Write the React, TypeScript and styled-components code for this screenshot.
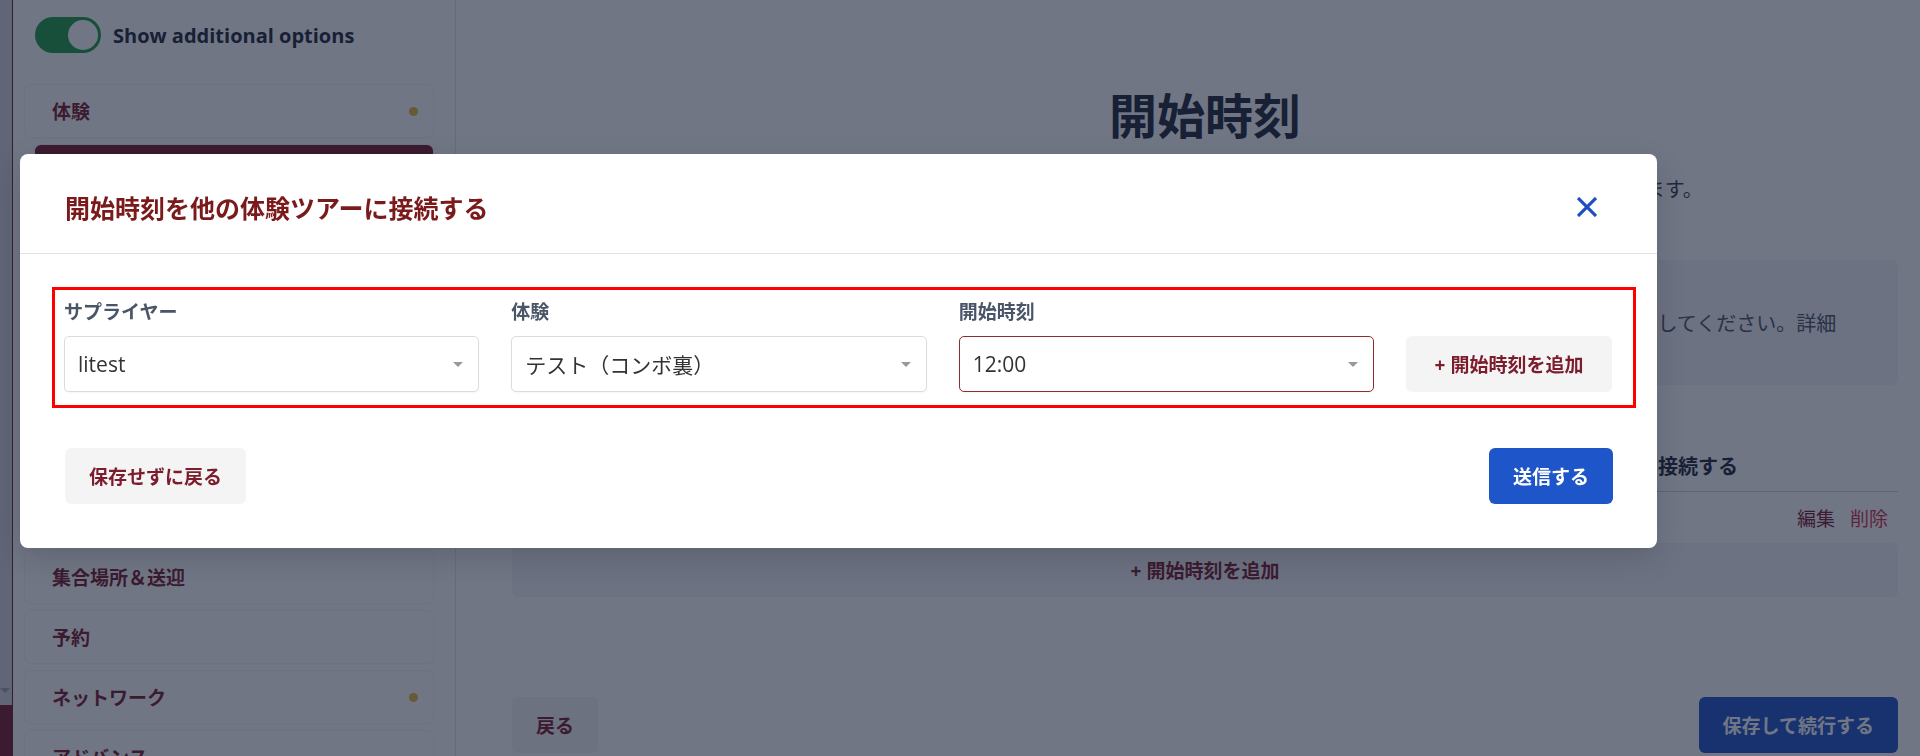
import React from 'react';
import styled, { createGlobalStyle } from 'styled-components';

const GlobalStyle = createGlobalStyle`
  * {
    box-sizing: border-box;
  }
  html,
  body {
    margin: 0;
    padding: 0;
    height: 100%;
    overflow: hidden;
  }
  body {
    font-family: 'Open Sans', 'Noto Sans CJK JP', sans-serif;
    background: #ffffff;
    color: #1f2937;
  }
`;

const MAROON = '#7b1d2c';
const BLUE = '#1e55c8';

const sidebarItems = [
  { label: '料金' },
  { label: '空き状況' },
  { label: '写真' },
  { label: '説明' },
  { label: 'キャンセルポリシー' },
];

const fields = [
  { label: 'サプライヤー', value: 'litest', focused: false },
  { label: '体験', value: 'テスト（コンボ裏）', focused: false },
  { label: '開始時刻', value: '12:00', focused: true },
];

export default function App() {
  return (
    <>
      <GlobalStyle />
      <Page>
        <LeftRail>
          <RailCaret />
          <RailBlock />
        </LeftRail>

        <Sidebar>
          <ToggleRow>
            <Toggle>
              <ToggleKnob />
            </Toggle>
            <ToggleLabel>Show additional options</ToggleLabel>
          </ToggleRow>

          <NavList>
            <NavItem>
              体験
              <Dot />
            </NavItem>
            <NavItem active>開始時刻</NavItem>
            {sidebarItems.map(item => (
              <NavItem key={item.label}>{item.label}</NavItem>
            ))}
            <NavGroupLabel>オプション</NavGroupLabel>
            <NavItem>集合場所＆送迎</NavItem>
            <NavItem>予約</NavItem>
            <NavItem>
              ネットワーク
              <Dot />
            </NavItem>
            <NavItem>アドバンス</NavItem>
          </NavList>
        </Sidebar>

        <Main>
          <PageTitle>開始時刻</PageTitle>
          <Subtitle>
            各体験ツアーの開始時刻を設定し、必要に応じて他の複数の体験ツアーの開始時刻に接続することができます。
          </Subtitle>
          <InfoBox>
            この体験の開始時刻はほかの体験ツアーと接続されています。変更する場合は、接続されている体験ツアーの開始時刻も更新してください。詳細
          </InfoBox>

          <TableHead>
            <span>開始時刻</span>
            <span>開始時刻を他の体験ツアーに接続する</span>
            <span />
          </TableHead>
          <TableRow>
            <span>12:00</span>
            <span />
            <Actions>
              <ActionLink>編集</ActionLink>
              <ActionLink danger>削除</ActionLink>
            </Actions>
          </TableRow>
          <AddBox>+ 開始時刻を追加</AddBox>

          <PageFooter>
            <Button>戻る</Button>
            <Button primary>保存して続行する</Button>
          </PageFooter>
        </Main>
      </Page>

      <Overlay />

      <Modal>
        <ModalHeader>
          <ModalTitle>開始時刻を他の体験ツアーに接続する</ModalTitle>
          <CloseButton aria-label="close">
            <svg width="20" height="20" viewBox="0 0 20 20">
              <path
                d="M1 1 L19 19 M19 1 L1 19"
                stroke="#1d4fc4"
                strokeWidth="3.2"
                fill="none"
              />
            </svg>
          </CloseButton>
        </ModalHeader>

        <ModalBody>
          <FieldRow>
            {fields.map(field => (
              <Field key={field.label}>
                <FieldLabel>{field.label}</FieldLabel>
                <SelectBox focused={field.focused}>
                  <span>{field.value}</span>
                  <Caret />
                </SelectBox>
              </Field>
            ))}
            <Button wide>+ 開始時刻を追加</Button>
          </FieldRow>
        </ModalBody>

        <ModalFooter>
          <Button>保存せずに戻る</Button>
          <Button primary>送信する</Button>
        </ModalFooter>
      </Modal>
    </>
  );
}

/*
 ** 背景のページ
 */
const Page = styled.div`
  display: flex;
  width: 1920px;
  height: 756px;
  overflow: hidden;
  background: #ffffff;
`;

const LeftRail = styled.div`
  width: 12px;
  flex-shrink: 0;
  background: #d4d7dd;
  display: flex;
  flex-direction: column;
  justify-content: flex-end;
`;

const RailCaret = styled.div`
  width: 0;
  height: 0;
  margin: 0 0 12px 0;
  border-left: 5px solid transparent;
  border-right: 5px solid transparent;
  border-top: 5px solid #9ca3af;
`;

const RailBlock = styled.div`
  height: 51px;
  background: ${MAROON};
`;

const Sidebar = styled.aside`
  width: 444px;
  flex-shrink: 0;
  border-left: 1px solid ${MAROON};
  border-right: 1px solid #e5e7eb;
  padding: 17px 22px 0 12px;
  display: flex;
  flex-direction: column;
`;

const ToggleRow = styled.div`
  display: flex;
  align-items: center;
  gap: 12px;
  margin-left: 10px;
`;

const Toggle = styled.div`
  width: 66px;
  height: 36px;
  border-radius: 18px;
  background: #1f9d48;
  display: flex;
  align-items: center;
  justify-content: flex-end;
  padding: 0 3px;
`;

const ToggleKnob = styled.div`
  width: 30px;
  height: 30px;
  border-radius: 50%;
  background: #ffffff;
`;

const ToggleLabel = styled.span`
  font-size: 20px;
  font-weight: 700;
  color: #1f2937;
`;

const NavList = styled.nav`
  display: flex;
  flex-direction: column;
  gap: 8px;
  margin-top: 32px;
`;

const NavItem = styled.div<{ active?: boolean }>`
  height: 52px;
  flex-shrink: 0;
  display: flex;
  align-items: center;
  justify-content: space-between;
  padding: 0 15px 0 27px;
  margin-left: ${props => (props.active ? '10px' : '0')};
  border-radius: 6px;
  font-size: 19px;
  font-weight: 700;
  color: ${props => (props.active ? '#ffffff' : MAROON)};
  background: ${props => (props.active ? MAROON : '#ffffff')};
  box-shadow: 0 0 0 1px #f5f5f7, 0 1px 2px rgba(0, 0, 0, 0.03);
`;

const NavGroupLabel = styled.div`
  height: 38px;
  flex-shrink: 0;
  display: flex;
  align-items: center;
  padding-left: 27px;
  font-size: 15px;
  color: #6b7280;
`;

const Dot = styled.span`
  width: 9px;
  height: 9px;
  border-radius: 50%;
  background: #e6b93d;
`;

const Main = styled.main`
  flex: 1;
  display: flex;
  flex-direction: column;
  padding: 0 22px 3px 56px;
`;

const PageTitle = styled.h1`
  margin: 87px 0 0;
  font-size: 48px;
  line-height: 58px;
  font-weight: 700;
  text-align: center;
  color: #1f2937;
`;

const Subtitle = styled.p`
  margin: 30px 0 0;
  font-size: 20px;
  line-height: 30px;
  text-align: center;
  color: #374151;
  white-space: nowrap;
`;

const InfoBox = styled.div`
  margin-top: 55px;
  height: 125px;
  display: flex;
  align-items: center;
  padding: 0 24px 0 31px;
  border-radius: 6px;
  background: #f3f4f6;
  font-size: 20px;
  color: #4b5563;
  white-space: nowrap;
  overflow: hidden;
`;

const TableHead = styled.div`
  margin-top: 55px;
  height: 52px;
  display: grid;
  grid-template-columns: 1fr auto 160px;
  align-items: center;
  border-bottom: 1px solid #d1d5db;
  font-size: 20px;
  font-weight: 700;
  color: #1f2937;
`;

const TableRow = styled.div`
  height: 51px;
  display: grid;
  grid-template-columns: 1fr auto 160px;
  align-items: center;
  font-size: 19px;
  color: #374151;
`;

const Actions = styled.div`
  display: flex;
  justify-content: flex-end;
  gap: 15px;
  padding-right: 10px;
`;

const ActionLink = styled.span<{ danger?: boolean }>`
  font-size: 19px;
  color: ${props => (props.danger ? '#d0344a' : MAROON)};
`;

const AddBox = styled.div`
  height: 54px;
  display: flex;
  align-items: center;
  justify-content: center;
  border-radius: 6px;
  background: #f3f4f6;
  font-size: 19px;
  font-weight: 700;
  color: ${MAROON};
`;

const PageFooter = styled.div`
  margin-top: auto;
  display: flex;
  justify-content: space-between;
`;

const Button = styled.button<{ primary?: boolean; wide?: boolean }>`
  height: 56px;
  width: ${props => (props.wide ? '206px' : 'auto')};
  padding: 0 24px;
  border: none;
  border-radius: 6px;
  font-family: 'Open Sans', 'Noto Sans CJK JP', sans-serif;
  font-size: 19px;
  font-weight: 700;
  white-space: nowrap;
  cursor: pointer;
  color: ${props => (props.primary ? '#ffffff' : MAROON)};
  background: ${props => (props.primary ? BLUE : '#f4f4f4')};
`;

/*
 ** モーダル
 */
const Overlay = styled.div`
  position: fixed;
  inset: 0;
  background: rgba(18, 26, 52, 0.6);
`;

const Modal = styled.div`
  position: fixed;
  top: 154px;
  left: 20px;
  width: 1637px;
  background: #ffffff;
  border-radius: 8px;
  box-shadow: 0 10px 30px rgba(0, 0, 0, 0.15);
`;

const ModalHeader = styled.div`
  height: 100px;
  display: flex;
  align-items: center;
  justify-content: space-between;
  padding: 7px 50px 0 45px;
  border-bottom: 1px solid #e3e3e3;
`;

const ModalTitle = styled.h2`
  margin: 0;
  font-size: 25px;
  font-weight: 700;
  color: #7a1a1a;
`;

const CloseButton = styled.button`
  width: 40px;
  height: 40px;
  border: none;
  background: transparent;
  display: flex;
  align-items: center;
  justify-content: center;
  padding: 0;
  cursor: pointer;
`;

const ModalBody = styled.div`
  padding: 33px 21px 0 32px;
`;

const FieldRow = styled.div`
  display: grid;
  grid-template-columns: repeat(3, 1fr) 206px;
  column-gap: 32px;
  align-items: end;
  border: 3px solid #ff0000;
  padding: 9px 21px 13px 9px;
`;

const Field = styled.div`
  display: flex;
  flex-direction: column;
  gap: 11px;
`;

const FieldLabel = styled.label`
  font-size: 19px;
  line-height: 26px;
  font-weight: 700;
  color: #4a5568;
`;

const SelectBox = styled.div<{ focused?: boolean }>`
  height: 56px;
  display: flex;
  align-items: center;
  justify-content: space-between;
  padding: 0 15px 0 13px;
  border: 1px solid ${props => (props.focused ? '#8f2d2d' : '#dcdcdc')};
  border-radius: 5px;
  background: #ffffff;
  font-size: 21px;
  color: #333333;
  box-shadow: 0 1px 2px rgba(0, 0, 0, 0.04);
`;

const Caret = styled.span`
  width: 0;
  height: 0;
  border-left: 5px solid transparent;
  border-right: 5px solid transparent;
  border-top: 5px solid #999999;
`;

const ModalFooter = styled.div`
  display: flex;
  justify-content: space-between;
  padding: 40px 44px 44px 45px;
`;
